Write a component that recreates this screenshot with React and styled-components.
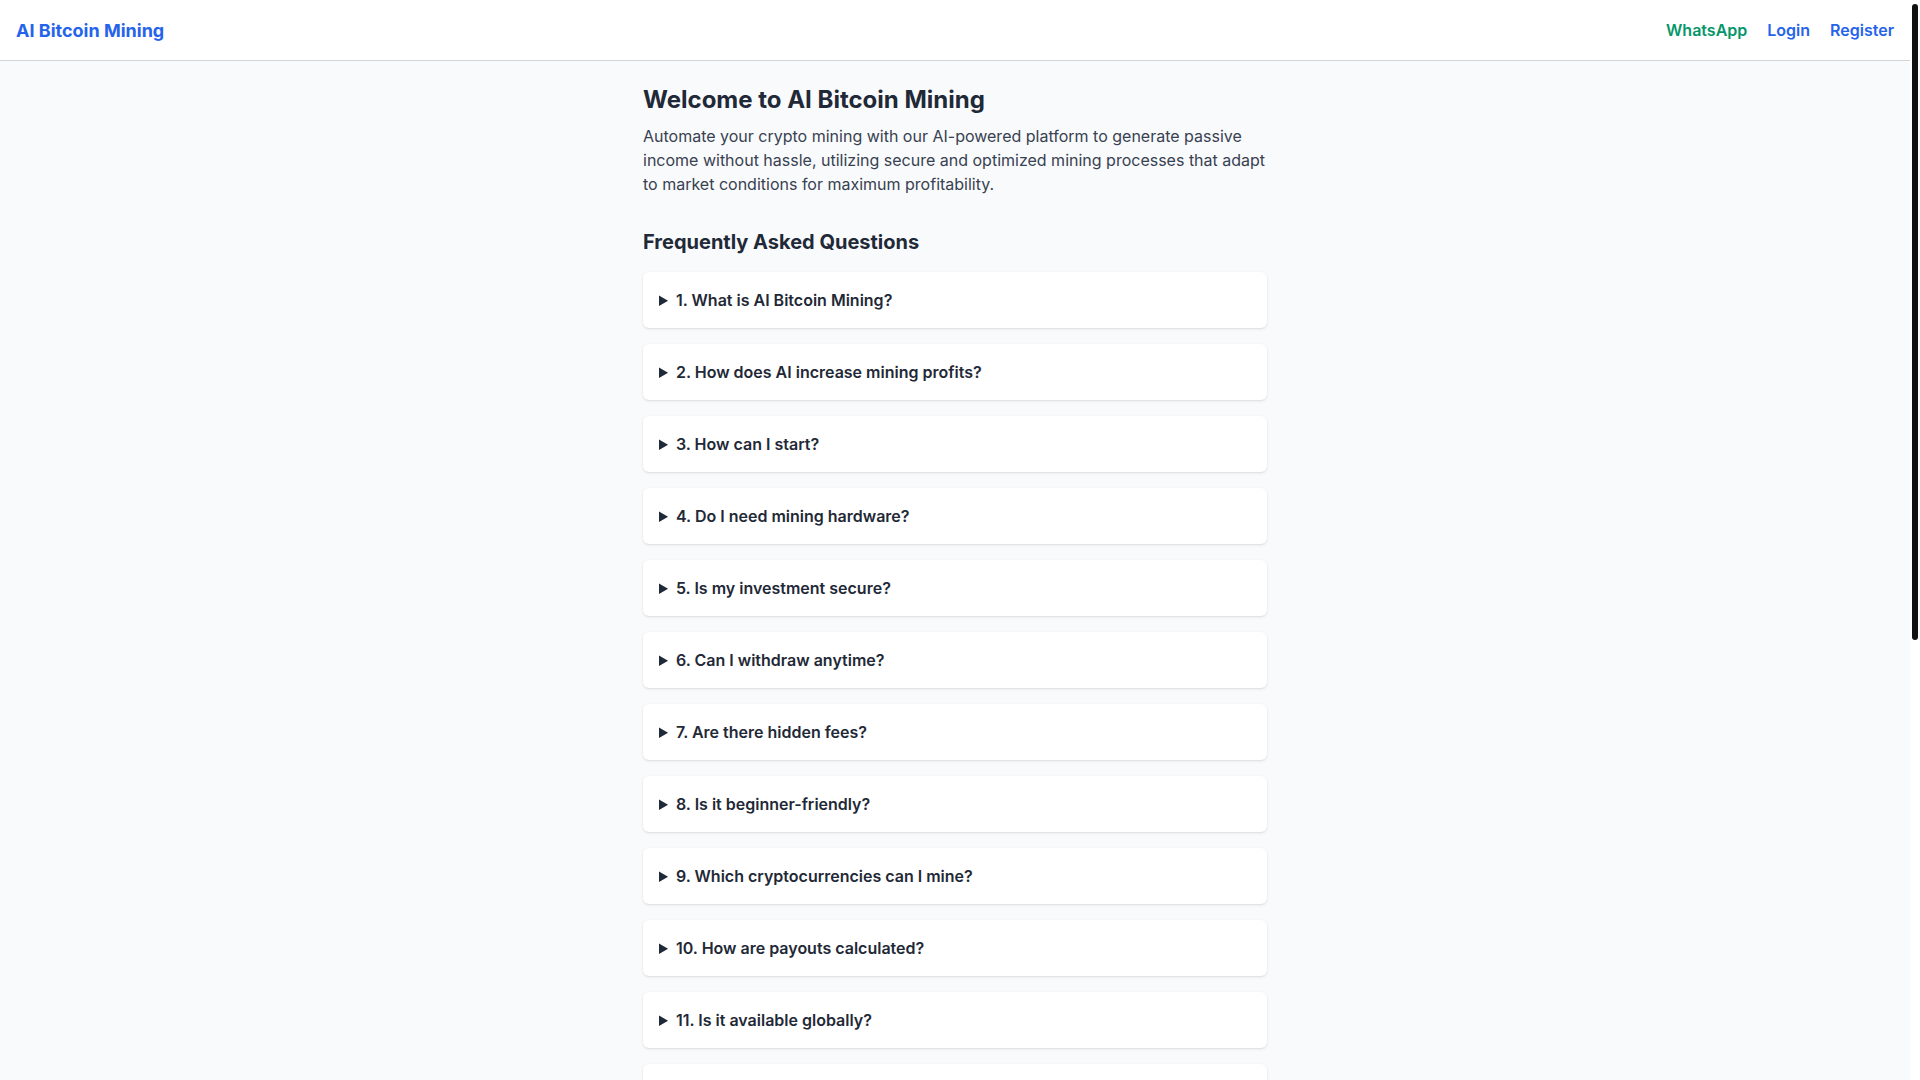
import React from 'react';
import styled, { createGlobalStyle } from 'styled-components';

const GlobalStyle = createGlobalStyle`
	html, body {
		margin: 0;
		padding: 0;
	}
	body {
		font-family: Inter, "Noto Sans", sans-serif;
		background: #f9fafb;
		color: #1f2937;
		padding-right: 10px;
	}
`;

// the window's scrollbar, as it shows in the picture
const ScrollTrack = styled.div`
	position: fixed;
	top: 0;
	right: 0;
	width: 10px;
	height: 100vh;
	background: #fff;
`;

const ScrollThumb = styled.div`
	position: absolute;
	top: 4px;
	left: 2px;
	width: 6px;
	height: 636px;
	border-radius: 3px;
	background: #111;
`;

const Header = styled.header`
	height: 61px;
	box-sizing: border-box;
	background: #fff;
	border-bottom: 1px solid #d1d5db;
	display: flex;
	align-items: center;
	justify-content: space-between;
	padding: 0 16px;
`;

const Logo = styled.a`
	font-size: 18px;
	font-weight: 700;
	color: #2563eb;
	text-decoration: none;
`;

const Nav = styled.nav`
	display: flex;
	gap: 20px;
`;

const NavLink = styled.a`
	font-size: 16px;
	font-weight: 600;
	color: ${props => (props.$green ? '#059669' : '#2563eb')};
	text-decoration: none;
`;

const Main = styled.main`
	max-width: 672px;
	margin: 0 auto;
	padding: 23px 24px 24px;
	box-sizing: border-box;
`;

const Title = styled.h1`
	font-size: 24px;
	line-height: 32px;
	font-weight: 700;
	margin: 0 0 8px;
`;

const Intro = styled.p`
	font-size: 16px;
	line-height: 24px;
	color: #374151;
	margin: 0;
`;

const SectionTitle = styled.h2`
	font-size: 20px;
	line-height: 28px;
	font-weight: 700;
	margin: 32px 0 16px;
`;

const FaqList = styled.div`
	display: flex;
	flex-direction: column;
	gap: 16px;
`;

const FaqItem = styled.details`
	background: #fff;
	border-radius: 6px;
	padding: 16px;
	box-shadow: 0 1px 3px rgba(0, 0, 0, 0.1), 0 1px 2px -1px rgba(0, 0, 0, 0.1);
`;

const Question = styled.summary`
	font-size: 16px;
	line-height: 24px;
	font-weight: 600;
	color: #1f2937;
	cursor: pointer;
`;

const Answer = styled.p`
	margin: 8px 0 0;
	color: #4b5563;
	line-height: 24px;
`;

const Footer = styled.footer`
	text-align: center;
	color: #6b7280;
	font-size: 14px;
	padding: 24px 0 40px;
`;

const faqs = [
	['What is AI Bitcoin Mining?', 'A platform that uses artificial intelligence to automate and optimize crypto mining.'],
	['How does AI increase mining profits?', 'AI adjusts mining strategies to market conditions in real time.'],
	['How can I start?', 'Register an account, choose a plan and start mining.'],
	['Do I need mining hardware?', 'No, all mining runs on our infrastructure.'],
	['Is my investment secure?', 'We use secure, encrypted processes to protect your funds.'],
	['Can I withdraw anytime?', 'Yes, withdrawals can be requested at any time.'],
	['Are there hidden fees?', 'No, all fees are shown upfront.'],
	['Is it beginner-friendly?', 'Yes, the platform is fully automated.'],
	['Which cryptocurrencies can I mine?', 'Bitcoin and other major cryptocurrencies.'],
	['How are payouts calculated?', 'Payouts depend on your plan and mining performance.'],
	['Is it available globally?', 'Yes, the platform is available worldwide.'],
	['What is the minimum deposit?', 'The minimum deposit depends on the selected plan.'],
	['How often are profits paid?', 'Profits are credited daily to your balance.'],
	['Can I upgrade my plan?', 'Yes, you can upgrade at any time from your dashboard.'],
	['How do I contact support?', 'Reach us through WhatsApp for quick assistance.'],
	['Is there a referral program?', 'Yes, invite friends and earn commissions.'],
	['Which payment methods are accepted?', 'We accept major cryptocurrencies.'],
	['Can I track my mining in real time?', 'Yes, your dashboard shows live statistics.'],
	['What happens if the market drops?', 'AI adapts strategies to reduce risk.'],
	['Do I need technical knowledge?', 'No, everything is handled automatically.']
];

export default function App() {
	return (
		<>
			<GlobalStyle />
			<Header>
				<Logo href="#">AI Bitcoin Mining</Logo>
				<Nav>
					<NavLink $green href="#">WhatsApp</NavLink>
					<NavLink href="#">Login</NavLink>
					<NavLink href="#">Register</NavLink>
				</Nav>
			</Header>
			<Main>
				<Title>Welcome to AI Bitcoin Mining</Title>
				<Intro>
					Automate your crypto mining with our AI-powered platform to generate passive
					income without hassle, utilizing secure and optimized mining processes that adapt
					to market conditions for maximum profitability.
				</Intro>
				<SectionTitle>Frequently Asked Questions</SectionTitle>
				<FaqList>
					{faqs.map(([q, a], i) => (
						<FaqItem key={i}>
							<Question>{i + 1}. {q}</Question>
							<Answer>{a}</Answer>
						</FaqItem>
					))}
				</FaqList>
			</Main>
			<Footer>© 2025 AI Bitcoin Mining. All rights reserved.</Footer>
			<ScrollTrack>
				<ScrollThumb />
			</ScrollTrack>
		</>
	);
}
